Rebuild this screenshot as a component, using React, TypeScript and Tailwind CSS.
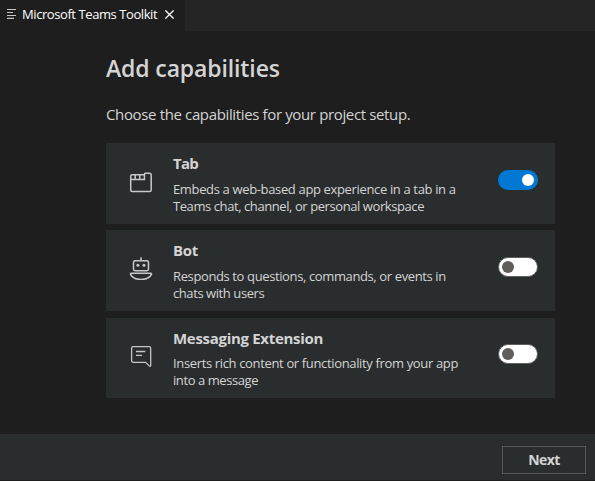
import type { ReactNode } from "react";

type Capability = {
  title: string;
  titleSpacing: string;
  lines: { text: string; spacing: string }[];
  icon: ReactNode;
  enabled: boolean;
  box: string;
  iconTop: string;
  textGap: string;
  toggleTop: string;
};

const TabIcon = () => (
  <svg width="24" height="24" viewBox="0 0 24 24" fill="none" stroke="#c8c9c9" strokeWidth="1.5">
    <path d="M1.700 6.200a1.500 1.500 0 0 1 1.500-1.500H15.400V4.300a1 1 0 0 1 1-1H20.600a1.600 1.600 0 0 1 1.600 1.600v15a1.600 1.600 0 0 1-1.600 1.600H3.200a1.500 1.500 0 0 1-1.500-1.500z" />
    <path d="M1.700 9.400h13.700V4.500M6.200 4.700v4.700M10.800 4.700v4.700" />
  </svg>
);

const BotIcon = () => (
  <svg width="24" height="24" viewBox="0 0 24 24" fill="none" stroke="#c8c9c9" strokeWidth="1.5">
    <path d="M12 1.200v3.600" />
    <rect x="4.500" y="4.700" width="15" height="10" rx="1.600" />
    <circle cx="8.900" cy="9.200" r="1.500" fill="#c8c9c9" stroke="none" />
    <circle cx="15" cy="9.200" r="1.500" fill="#c8c9c9" stroke="none" />
    <path d="M2.300 17.300h19.400c.7 0 1 .5.7 1.100-1.500 3.200-5.400 5-10.400 5S3.100 21.600 1.600 18.400C1.300 17.800 1.600 17.300 2.300 17.300z" />
  </svg>
);

const MessageIcon = () => (
  <svg width="24" height="24" viewBox="0 0 24 24" fill="none" stroke="#c4c5c5" strokeWidth="1.300">
    <path d="M4.200 2.600h15.900a1.600 1.600 0 0 1 1.600 1.600v17.400c0 .8-.7 1-1.200.5l-3.900-3.800H4.200a1.600 1.600 0 0 1-1.600-1.600V4.200a1.600 1.600 0 0 1 1.600-1.600z" />
    <path d="M7 7.500h9.300M7 11.400h6" />
  </svg>
);

const capabilities: Capability[] = [
  {
    title: "Tab",
    titleSpacing: "tracking-[-0.7px]",
    lines: [
      { text: "Embeds a web-based app experience in a tab in a", spacing: "tracking-[-0.35px]" },
      { text: "Teams chat, channel, or personal workspace", spacing: "tracking-[-0.42px]" },
    ],
    icon: <TabIcon />,
    enabled: true,
    box: "h-[81px] mb-1.5",
    iconTop: "pt-[27px]",
    textGap: "pt-2",
    toggleTop: "pt-[27px]",
  },
  {
    title: "Bot",
    titleSpacing: "tracking-[-0.3px]",
    lines: [
      { text: "Responds to questions, commands, or events in", spacing: "tracking-[-0.38px]" },
      { text: "chats with users", spacing: "tracking-[-0.42px]" },
    ],
    icon: <BotIcon />,
    enabled: false,
    box: "h-[81px] mb-[7px]",
    iconTop: "pt-[26px]",
    textGap: "pt-2",
    toggleTop: "pt-[27px]",
  },
  {
    title: "Messaging Extension",
    titleSpacing: "tracking-[-0.3px]",
    lines: [
      { text: "Inserts rich content or functionality from your app", spacing: "tracking-[-0.35px]" },
      { text: "into a message", spacing: "tracking-[-0.42px]" },
    ],
    icon: <MessageIcon />,
    enabled: false,
    box: "h-20",
    iconTop: "pt-[26px]",
    textGap: "pt-[7px]",
    toggleTop: "pt-[26px]",
  },
];

function Toggle({ on }: { on: boolean }) {
  return (
    <button
      role="switch"
      aria-checked={on}
      className={
        on
          ? "flex h-5 w-10 items-center justify-end rounded-full bg-[#0078d4] pr-1"
          : "flex h-5 w-10 items-center rounded-full border border-[#605e5c] bg-white pl-[3px]"
      }
    >
      <span className={on ? "size-3 rounded-full bg-white" : "size-3 rounded-full bg-[#605e5c]"} />
    </button>
  );
}

function Card({ item }: { item: Capability }) {
  return (
    <section className={`flex w-[449px] bg-[#2a2d2e] ${item.box}`}>
      <div className={`w-[67px] pl-[23px] ${item.iconTop}`}>{item.icon}</div>
      <div className="w-[325px] pt-[10px]">
        <h2 className={`text-[15px] leading-5 font-bold ${item.titleSpacing}`}>{item.title}</h2>
        <div className={item.textGap}>
          {item.lines.map((line) => (
            <p key={line.text} className={`text-[13px] leading-[17px] whitespace-nowrap ${line.spacing}`}>
              {line.text}
            </p>
          ))}
        </div>
      </div>
      <div className={item.toggleTop}>
        <Toggle on={item.enabled} />
      </div>
    </section>
  );
}

export default function App() {
  return (
    <div className="flex h-[481px] w-[595px] flex-col overflow-hidden bg-[#1e1e1e] font-['Open_Sans','Noto_Sans',sans-serif] text-[#d4d4d4]">
      <header className="flex h-[31px] bg-[#252526]">
        <div className="flex w-[185px] items-center bg-[#1e1e1e] pb-[3px] pl-[7px] text-white">
          <svg width="10" height="10" viewBox="0 0 10 10" stroke="#c5c5c5" strokeWidth="1.2">
            <path d="M0 .5h9M0 3.500h6M0 6.500h9M0 9.400h7" />
          </svg>
          <span className="w-[142px] pl-[5px] text-[13px] leading-5 tracking-[-0.42px] whitespace-nowrap">
            Microsoft Teams Toolkit
          </span>
          <svg className="ml-[6px]" width="9" height="9" viewBox="0 0 9 9" stroke="#ffffff" strokeWidth="1.300">
            <path d="M.4.4l8.200 8.200M8.600.4L.4 8.600" />
          </svg>
        </div>
      </header>
      <main className="h-[403px] pl-[106px]">
        <h1 className="pt-[21px] text-[23px] leading-8 font-semibold tracking-[-0.12px] whitespace-nowrap">
          Add capabilities
        </h1>
        <p className="pt-5 pb-[19px] text-[15px] leading-5 tracking-[-0.36px] whitespace-nowrap">
          Choose the capabilities for your project setup.
        </p>
        {capabilities.map((item) => (
          <Card key={item.title} item={item} />
        ))}
      </main>
      <footer className="flex h-[47px] justify-end border-b border-[#1e1e1e] bg-[#2a2d2e] pt-3 pr-[9px]">
        <button className="flex h-7 w-[84px] items-center justify-center border border-[#555758] pb-px text-[14px] font-bold tracking-[-0.6px]">
          Next
        </button>
      </footer>
    </div>
  );
}
